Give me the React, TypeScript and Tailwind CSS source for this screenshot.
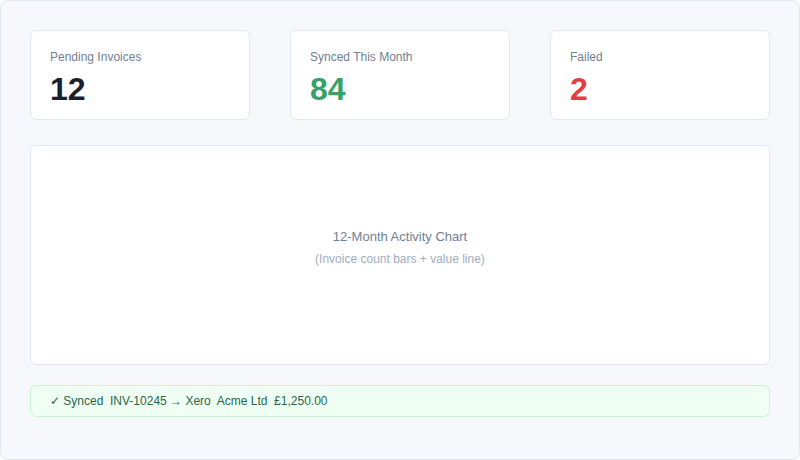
import React from "react";

type Stat = { label: string; value: string; color: string };

const stats: Stat[] = [
  { label: "Pending Invoices", value: "12", color: "text-[#1a202c]" },
  { label: "Synced This Month", value: "84", color: "text-[#38a169]" },
  { label: "Failed", value: "2", color: "text-[#e53e3e]" },
];

function StatCard({ label, value, color }: Stat) {
  return (
    <div className="h-[90px] rounded-md border border-[#e2e8f0] bg-white px-[19px] pt-[18px]">
      <div className="text-[12px] leading-4 text-[#718096]">{label}</div>
      <div className={`mt-1.5 text-[32px] font-bold leading-[36px] ${color}`}>{value}</div>
    </div>
  );
}

export default function App() {
  return (
    <div
      className="h-[460px] w-[800px] rounded-lg border border-[#e2e8f0] bg-[#f7f8fb] p-[29px]"
      style={{ fontFamily: '"Liberation Sans", Arial, sans-serif' }}
    >
      <div className="grid grid-cols-3 gap-10">
        {stats.map((s) => (
          <StatCard key={s.label} {...s} />
        ))}
      </div>

      <div className="mt-[25px] flex h-[220px] flex-col items-center justify-center rounded-md border border-[#e2e8f0] bg-white pb-[14px]">
        <div className="text-[13px] leading-4 text-[#718096]">12-Month Activity Chart</div>
        <div className="mt-1.5 text-[12px] leading-4 text-[#a0aec0]">(Invoice count bars + value line)</div>
      </div>

      <div className="mt-5 flex h-[32px] items-center rounded-md border border-[#c6f6d5] bg-[#f0fff4] px-[19px] text-[12px] text-[#276749] whitespace-pre">
        {"✓ Synced  INV-10245 → Xero  Acme Ltd  £1,250.00"}
      </div>
    </div>
  );
}
